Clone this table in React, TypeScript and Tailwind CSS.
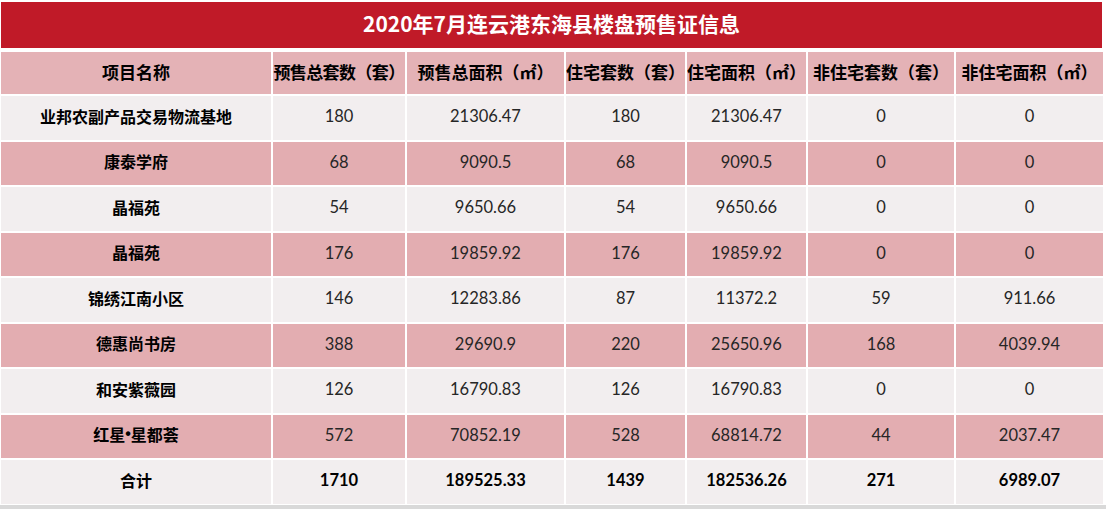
import React from "react";

const cols = "grid grid-cols-[270px_134px_159px_121px_121px_148px_149px]";
const cjk = "font-['Noto_Sans_CJK_SC',sans-serif]";
const num = "font-['Lato','Liberation_Sans',sans-serif]";

const headers = [
  "项目名称",
  "预售总套数（套）",
  "预售总面积（㎡）",
  "住宅套数（套）",
  "住宅面积（㎡）",
  "非住宅套数（套）",
  "非住宅面积（㎡）",
];

const rows: React.ReactNode[][] = [
  ["业邦农副产品交易物流基地", "180", "21306.47", "180", "21306.47", "0", "0"],
  ["康泰学府", "68", "9090.5", "68", "9090.5", "0", "0"],
  ["晶福苑", "54", "9650.66", "54", "9650.66", "0", "0"],
  ["晶福苑", "176", "19859.92", "176", "19859.92", "0", "0"],
  ["锦绣江南小区", "146", "12283.86", "87", "11372.2", "59", "911.66"],
  ["德惠尚书房", "388", "29690.9", "220", "25650.96", "168", "4039.94"],
  ["和安紫薇园", "126", "16790.83", "126", "16790.83", "0", "0"],
  [
    <>
      红星<span className="font-['Liberation_Sans',sans-serif]">•</span>星都荟
    </>,
    "572",
    "70852.19",
    "528",
    "68814.72",
    "44",
    "2037.47",
  ],
];

const total = ["合计", "1710", "189525.33", "1439", "182536.26", "271", "6989.07"];

export default function App() {
  return (
    <div className="flex h-[509px] w-[1106px] flex-col bg-white">
      <div className="ml-px mt-[2px] flex h-[46px] w-[1101px] items-center justify-center bg-[#c01a28] pb-[3px]">
        <h1 className={`${cjk} text-[21px] font-bold text-white`}>2020年7月连云港东海县楼盘预售证信息</h1>
      </div>
      <div className="ml-px mt-[4px] w-[1102px]">
        <div className={`${cols} h-[42px] bg-[#e4b2b6]`}>
          {headers.map((h, i) => (
            <div
              key={i}
              className={`${cjk} flex items-center justify-center overflow-hidden whitespace-nowrap pb-[2px] text-[17px] font-bold text-black ${
                i > 0 ? "border-l-2 border-white" : ""
              } ${i === 1 ? "tracking-[-0.6px]" : ""}`}
            >
              {h}
            </div>
          ))}
        </div>
        {rows.map((r, ri) => (
          <div
            key={ri}
            className={`${cols} h-[45.5px] border-t-2 border-white ${ri % 2 === 0 ? "bg-[#f2eeef]" : "bg-[#e3adb1]"}`}
          >
            {r.map((c, i) => (
              <div
                key={i}
                className={`flex items-center justify-center whitespace-nowrap ${i > 0 ? "border-l-2 border-white" : ""} ${
                  i === 0 ? `${cjk} pb-[4px] text-[16px] font-bold text-black` : `${num} pb-[2px] text-[16.5px] text-[#262626]`
                }`}
              >
                {c}
              </div>
            ))}
          </div>
        ))}
        <div className={`${cols} h-[45.5px] border-t-2 border-white bg-[#f2eeef]`}>
          {total.map((c, i) => (
            <div
              key={i}
              className={`flex items-center justify-center whitespace-nowrap font-bold text-black ${i > 0 ? "border-l-2 border-white" : ""} ${
                i === 0 ? `${cjk} pb-[4px] text-[16px]` : `${num} pb-[2px] text-[16.5px]`
              }`}
            >
              {c}
            </div>
          ))}
        </div>
      </div>
      <div className="mt-[1px] flex-1 bg-[#d9d9d9]" />
    </div>
  );
}
